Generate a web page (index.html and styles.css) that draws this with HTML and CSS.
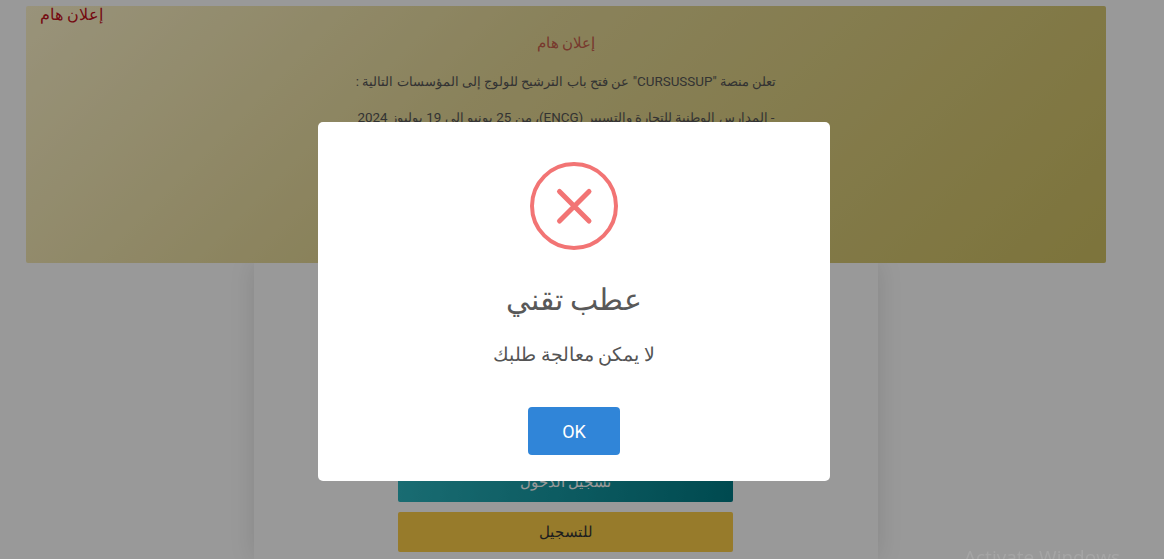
FILE: index.html
```html
<!DOCTYPE html>
<html lang="ar" dir="rtl">
<head>
<meta charset="utf-8">
<title>عطب تقني</title>
<link rel="stylesheet" href="styles.css">
</head>
<body>
<section class="notice">
  <h2 class="notice-label">إعلان هام</h2>
  <p class="notice-title">إعلان هام</p>
  <p class="notice-line">تعلن منصة "CURSUSSUP" عن فتح باب الترشيح للولوج إلى المؤسسات التالية :</p>
  <p class="notice-line">- المدارس الوطنية للتجارة والتسيير (ENCG)، من 25 يونيو إلى 19 يوليوز 2024</p>
</section>
<main class="card">
  <div class="card-actions">
    <a class="btn btn-login">تسجيل الدخول</a>
    <a class="btn btn-register">للتسجيل</a>
  </div>
</main>
<div class="overlay">
  <div class="modal">
    <svg class="error-icon" viewBox="0 0 88 88" aria-hidden="true">
      <circle cx="44" cy="44" r="42" fill="none" stroke="#f27474" stroke-width="4"/>
      <path d="M29.500 29.500 59 59M59 29.500 29.500 59" stroke="#f27474" stroke-width="5" stroke-linecap="round"/>
    </svg>
    <h1 class="modal-title">عطب تقني</h1>
    <p class="modal-text">لا يمكن معالجة طلبك</p>
    <button class="modal-ok" type="button">OK</button>
  </div>
</div>
<div class="watermark" dir="ltr">Activate Windows</div>
</body>
</html>
```
FILE: styles.css
```css
* { box-sizing: border-box; }
html, body { height: 100%; }
body {
  margin: 0;
  height: 559px;
  overflow: hidden;
  background: #fff;
  font-family: Roboto, sans-serif;
  color: #333;
}
.notice {
  position: relative;
  z-index: 1;
  margin: 6px 58px 0 26px;
  height: 257px;
  padding-top: 27px;
  border-radius: 2px;
  background: linear-gradient(135deg, #fff5cc 0%, #e6d998 40%, #d0c163 100%);
  text-align: center;
  overflow: hidden;
}
.notice-label {
  position: absolute;
  top: 0;
  left: 14px;
  margin: 0;
  font-size: 16.200px;
  line-height: 18px;
  font-weight: 400;
  color: #c4121d;
}
.notice-title {
  margin: 0 0 18px;
  font-size: 15.300px;
  line-height: 20px;
  color: #c8604c;
}
.notice-line { margin: 0 0 14px; font-size: 13.400px; line-height: 22px; color: #555; }
.card {
  width: 624px;
  height: 296px;
  margin-right: 286px;
  padding-top: 199px;
  background: #fff;
  box-shadow: 0 0 24px rgba(0,0,0,.12);
}
.card-actions {
  width: 335px;
  margin: 0 145px 0 auto;
  display: flex;
  flex-direction: column;
  gap: 10px;
}
.btn {
  display: flex;
  align-items: center;
  justify-content: center;
  height: 40px;
  border-radius: 2px;
  font-size: 15px;
}
.btn-login { background: linear-gradient(100deg, #2bb5bf, #007b85); color: #fff; }
.btn-register { background: #fccd49; color: #333; }
.watermark {
  position: absolute;
  z-index: 6;
  left: 964px;
  top: 544px;
  font-family: "Open Sans", sans-serif;
  font-size: 19px;
  color: rgba(255,255,255,.12);
}
.overlay {
  position: fixed;
  inset: 0;
  z-index: 5;
  padding-right: 16px;
  display: flex;
  align-items: flex-start;
  justify-content: center;
  background: rgba(0,0,0,.4);
}
.modal {
  width: 512px;
  height: 359px;
  margin-top: 122px;
  padding-top: 40px;
  border-radius: 5px;
  background: #fff;
  display: flex;
  flex-direction: column;
  align-items: center;
}
.error-icon { width: 88px; height: 88px; display: block; }
.modal-title {
  margin: 28px 0 0;
  font-size: 29.500px;
  line-height: 44px;
  font-weight: 400;
  color: #595959;
}
.modal-text {
  margin: 21px 0 0;
  font-size: 18.500px;
  line-height: 24px;
  color: #545454;
}
.modal-ok {
  margin-top: 40px;
  width: 92px;
  height: 48px;
  border: 0;
  border-radius: 4px;
  background: #3085d8;
  color: #fff;
  font: 400 18px Roboto, sans-serif;
}
```
